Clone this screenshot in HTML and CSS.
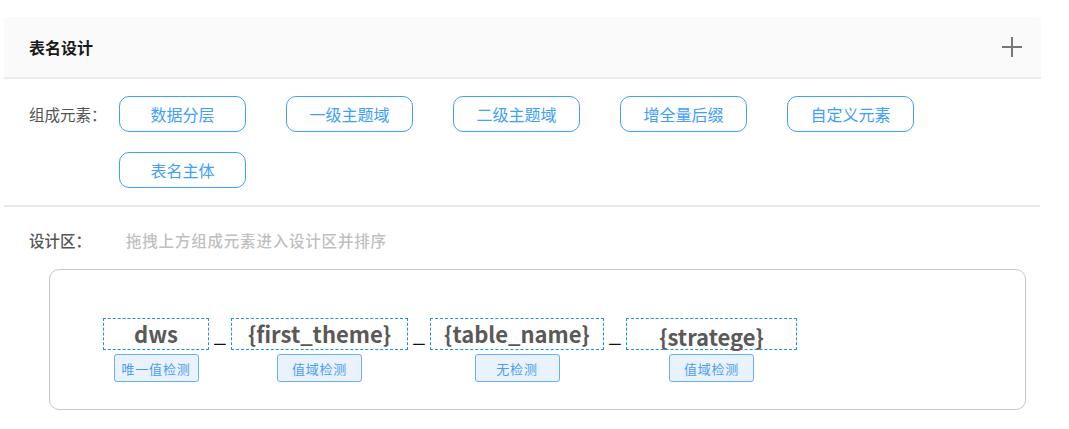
FILE: index.html
```html
<!DOCTYPE html>
<html lang="zh-CN">
<head>
<meta charset="utf-8">
<title>表名设计</title>
<link rel="stylesheet" href="styles.css">
</head>
<body>
<div class="card">
  <div class="card-header">
    <div class="card-title">表名设计</div>
    <svg class="plus" width="20" height="20" viewBox="0 0 20 20"><path d="M10 0V20M0 10H20" stroke="#777" stroke-width="2" fill="none"/></svg>
  </div>
  <div class="elements">
    <div class="label">组成元素：</div>
    <div class="chips">
      <div class="chip">数据分层</div>
      <div class="chip">一级主题域</div>
      <div class="chip">二级主题域</div>
      <div class="chip">增全量后缀</div>
      <div class="chip">自定义元素</div>
      <div class="chip">表名主体</div>
    </div>
  </div>
  <div class="design">
    <div class="design-head">
      <div class="label label-design">设计区：</div>
      <div class="hint">拖拽上方组成元素进入设计区并排序</div>
    </div>
    <div class="canvas">
      <div class="parts">
        <div class="part">
          <div class="part-box w-dws">dws</div>
          <div class="tag">唯一值检测</div>
        </div>
        <span class="sep">_</span>
        <div class="part">
          <div class="part-box w-first">{first_theme}</div>
          <div class="tag">值域检测</div>
        </div>
        <span class="sep">_</span>
        <div class="part">
          <div class="part-box w-table">{table_name}</div>
          <div class="tag">无检测</div>
        </div>
        <span class="sep">_</span>
        <div class="part">
          <div class="part-box w-strat low">{stratege}</div>
          <div class="tag">值域检测</div>
        </div>
      </div>
    </div>
  </div>
</div>
</body>
</html>
```
FILE: styles.css
```css
* { box-sizing: border-box; }
body {
  margin: 0;
  background: #fff;
  font-family: "Noto Sans CJK SC", "Noto Sans", sans-serif;
  color: #333;
}
.card {
  margin: 17px 0 0 4px;
  width: 1037px;
}
.card-header {
  height: 62px;
  background: #fafafa;
  border-bottom: 2px solid #ececec;
  border-radius: 4px 4px 0 0;
  display: flex;
  align-items: center;
  justify-content: space-between;
  padding: 0 19px 0 25px;
}
.card-title {
  font-size: 16px;
  font-weight: bold;
  color: #1a1a1a;
  line-height: 20px;
}
.plus { display: block; }
.elements {
  display: flex;
  align-items: flex-start;
  padding: 17px 0 17px 25px;
  border-bottom: 2px solid #e8e8e8;
  width: 1036px;
}
.label {
  width: 90px;
  font-size: 15.5px;
  line-height: 36px;
  color: #555;
  flex-shrink: 0;
}
.chips {
  display: flex;
  flex-wrap: wrap;
  column-gap: 40px;
  row-gap: 20px;
  width: 800px;
}
.chip {
  width: 127px;
  height: 36px;
  border: 1px solid #409eff;
  border-radius: 10px;
  color: #409eff;
  font-size: 16px;
  display: flex;
  align-items: center;
  justify-content: center;
}
.design {
  padding: 23px 0 0 25px;
}
.design-head {
  display: flex;
  align-items: center;
  height: 20px;
}
.label-design {
  width: 97px;
  line-height: 20px;
  font-weight: 500;
}
.hint {
  font-size: 15.5px;
  letter-spacing: 0.8px;
  color: #c0c0c0;
  font-weight: 500;
  line-height: 20px;
}
.canvas {
  margin: 19px 0 0 20px;
  width: 977px;
  height: 141px;
  border: 1px solid #c8c8c8;
  border-radius: 10px;
  padding: 48px 0 0 53px;
}
.parts {
  display: flex;
  align-items: flex-start;
}
.part {
  display: flex;
  flex-direction: column;
  align-items: center;
  gap: 4px;
}
.part-box {
  height: 32px;
  border: 1px dashed #1890ff;
  font-size: 22px;
  font-weight: bold;
  color: #595959;
  line-height: 28px;
  text-align: center;
  white-space: nowrap;
}
.w-dws { width: 106px; }
.w-first { width: 177px; }
.w-table { width: 174px; }
.w-strat { width: 171px; }
.low { padding-top: 3px; }
.tag {
  width: 85px;
  height: 28px;
  background: #e8f3ff;
  border: 1px solid #6aaef7;
  border-radius: 3px;
  color: #4f9bf0;
  font-size: 13px;
  letter-spacing: 0.8px;
  display: flex;
  align-items: center;
  justify-content: center;
}
.sep {
  width: 22px;
  text-align: center;
  font-size: 22px;
  line-height: 28px;
  height: 32px;
  color: #111;
}
```
